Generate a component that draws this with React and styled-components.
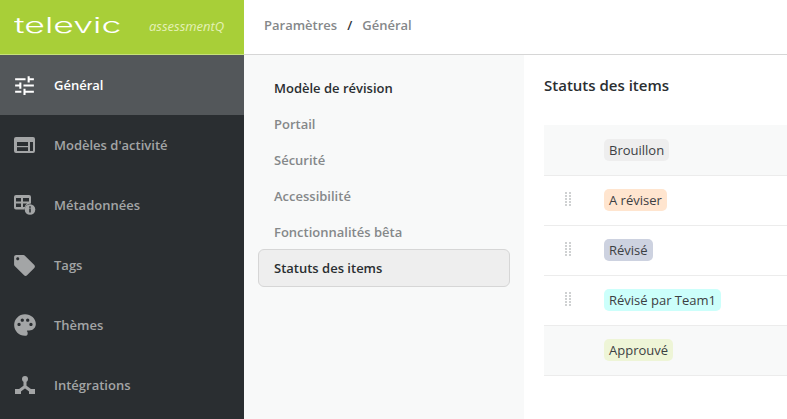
import React from 'react';
import styled, { createGlobalStyle } from 'styled-components';
import { MdTune, MdLocalOffer, MdPalette } from 'react-icons/md';

const GlobalStyle = createGlobalStyle`
  html, body {
    margin: 0;
    height: 100%;
    overflow: hidden;
    background: #fff;
    font-family: "Open Sans", "Liberation Sans", sans-serif;
  }
  * { box-sizing: border-box; }
`;

const Page = styled.div`
  display: flex;
  width: 787px;
  height: 419px;
  overflow: hidden;
`;

const Sidebar = styled.aside`
  width: 244px;
  flex: none;
  background: #2a2e31;
`;

const Brand = styled.div`
  display: flex;
  align-items: center;
  height: 55px;
  padding: 0 0 4px 14px;
  background: #a8cf38;
  border-bottom: 1px solid #c6e17a;
`;

const BrandName = styled.span`
  width: 106px;
  font-family: "Inter", sans-serif;
  font-size: 22px;
  font-weight: 300;
  line-height: 30px;
  color: #fff;
  transform: scaleX(1.62);
  transform-origin: left center;
`;

const BrandProduct = styled.span`
  margin-left: 29px;
  padding-top: 2px;
  font-size: 13px;
  font-style: italic;
  color: #e4f1b6;
`;

const MenuItem = styled.div`
  display: flex;
  align-items: center;
  gap: 19px;
  height: 60px;
  padding-left: 14px;
  font-size: 13px;
  font-weight: 600;
  color: ${(p) => (p.$active ? '#fff' : '#a3a5a6')};
  background: ${(p) => (p.$active ? '#53575a' : 'transparent')};
`;

const IconBox = styled.span`
  display: flex;
  align-items: center;
  justify-content: center;
  width: 21px;
  height: 21px;
  color: ${(p) => (p.$active ? '#fff' : '#a3a5a6')};

  svg {
    flex: none;
  }
`;

const Main = styled.div`
  display: flex;
  flex-direction: column;
  flex: 1;
  min-width: 0;
`;

const Breadcrumb = styled.header`
  display: flex;
  align-items: center;
  gap: 10px;
  height: 55px;
  padding: 0 0 4px 20px;
  font-size: 13px;
  font-weight: 600;
  color: #85888a;
  border-bottom: 1px solid #d6d6d6;
`;

const Slash = styled.span`
  color: #33373a;
`;

const Body = styled.div`
  display: flex;
  flex: 1;
`;

const SubNav = styled.nav`
  display: flex;
  flex-direction: column;
  width: 280px;
  flex: none;
  padding: 15px 14px 0;
  background: #f8f9f9;
`;

const SubNavItem = styled.div`
  display: flex;
  align-items: center;
  height: ${(p) => (p.$selected ? '38px' : '36px')};
  margin-top: ${(p) => (p.$selected ? '-1px' : '0')};
  padding-left: 15px;
  font-size: 13px;
  font-weight: 600;
  color: ${(p) => (p.$muted ? '#85888a' : '#2a2e31')};
  background: ${(p) => (p.$selected ? '#eeeeee' : 'transparent')};
  border: 1px solid ${(p) => (p.$selected ? '#d6d6d6' : 'transparent')};
  border-radius: 6px;
`;

const Content = styled.section`
  flex: 1;
  padding: 20px 0 0 20px;
`;

const Title = styled.h2`
  margin: 0 0 29px;
  font-size: 15px;
  line-height: 21px;
  font-weight: 600;
  color: #2a2e31;
`;

const Row = styled.div`
  display: flex;
  align-items: center;
  height: 50px;
  padding-bottom: 1px;
  background: ${(p) => (p.$locked ? '#f8f9f9' : '#fff')};
  border-bottom: 1px solid #ececec;

  &:first-of-type {
    height: 51px;
    padding-bottom: 0;
  }
`;

const HandleCell = styled.span`
  display: flex;
  justify-content: center;
  width: 60px;
  padding: 0 12px 2px 0;
`;

const Badge = styled.span`
  padding: 0 5px;
  height: 22px;
  font-size: 13px;
  line-height: 22px;
  color: #3c4043;
  background: ${(p) => p.$color};
  border-radius: 5px;
`;

const Handle = () => (
  <svg width="6" height="15" viewBox="0 0 6 15" fill="#cfd1d2">
    {[0, 3, 6, 9, 12].map((y) => (
      <g key={y}>
        <rect x="0" y={y} width="2" height="2" />
        <rect x="4" y={y} width="2" height="2" />
      </g>
    ))}
  </svg>
);

const TemplateIcon = () => (
  <svg width="21" height="16" viewBox="0 0 21 16">
    <path
      fill="currentColor"
      fillRule="evenodd"
      d="M2 0h17a2 2 0 0 1 2 2v12a2 2 0 0 1-2 2H2a2 2 0 0 1-2-2V2a2 2 0 0 1 2-2zM3 5v9h11V5H3zm13 0v9h3V5h-3z"
    />
    <rect x="3" y="9" width="11" height="1.2" fill="currentColor" />
  </svg>
);

const MetadataIcon = () => (
  <svg width="22" height="20" viewBox="0 0 22 20">
    <path
      fill="currentColor"
      fillRule="evenodd"
      d="M2 0h13a2 2 0 0 1 2 2v6.5a6.5 6.5 0 0 0-6.5 6H2a2 2 0 0 1-2-2V2a2 2 0 0 1 2-2zM2 3v3.5h5V3H2zm7 0v3.5h6V3H9zM2 8.5V12h5V8.5H2zm7 0V12h1.6A7 7 0 0 1 13 8.5H9z"
    />
    <circle cx="16" cy="14.5" r="5.3" fill="currentColor" />
    <rect x="15.2" y="13.5" width="1.6" height="4" fill="#2a2e31" />
    <rect x="15.2" y="11.3" width="1.6" height="1.5" fill="#2a2e31" />
  </svg>
);

const IntegrationIcon = () => (
  <svg width="20" height="18" viewBox="0 0 20 18">
    <circle cx="10" cy="3" r="3" fill="currentColor" />
    <path d="M10 5v5.5M10 10.5L4 15M10 10.5L16 15" stroke="currentColor" strokeWidth="3" fill="none" />
    <rect x="0" y="13" width="6" height="5" fill="currentColor" />
    <rect x="14" y="13" width="6" height="5" fill="currentColor" />
  </svg>
);

const menu = [
  { label: 'Général', icon: <MdTune size={25} />, active: true },
  { label: "Modèles d'activité", icon: <TemplateIcon /> },
  { label: 'Métadonnées', icon: <MetadataIcon /> },
  { label: 'Tags', icon: <MdLocalOffer size={25} /> },
  { label: 'Thèmes', icon: <MdPalette size={26} /> },
  { label: 'Intégrations', icon: <IntegrationIcon /> },
];

const subNav = [
  { label: 'Modèle de révision' },
  { label: 'Portail', muted: true },
  { label: 'Sécurité', muted: true },
  { label: 'Accessibilité', muted: true },
  { label: 'Fonctionnalités bêta', muted: true },
  { label: 'Statuts des items', selected: true },
];

const statuses = [
  { label: 'Brouillon', color: '#eeeeee', locked: true },
  { label: 'A réviser', color: '#ffe5cf' },
  { label: 'Révisé', color: '#cdd2e0' },
  { label: 'Révisé par Team1', color: '#ccfffb' },
  { label: 'Approuvé', color: '#eef5d7', locked: true },
];

const App = () => (
  <>
    <GlobalStyle />
    <Page>
      <Sidebar>
        <Brand>
          <BrandName>televic</BrandName>
          <BrandProduct>assessmentQ</BrandProduct>
        </Brand>
        {menu.map((item) => (
          <MenuItem key={item.label} $active={item.active}>
            <IconBox $active={item.active}>{item.icon}</IconBox>
            {item.label}
          </MenuItem>
        ))}
      </Sidebar>
      <Main>
        <Breadcrumb>
          <span>Paramètres</span>
          <Slash>/</Slash>
          <span>Général</span>
        </Breadcrumb>
        <Body>
          <SubNav>
            {subNav.map((item) => (
              <SubNavItem key={item.label} $muted={item.muted} $selected={item.selected}>
                {item.label}
              </SubNavItem>
            ))}
          </SubNav>
          <Content>
            <Title>Statuts des items</Title>
            {statuses.map((status) => (
              <Row key={status.label} $locked={status.locked}>
                <HandleCell>{!status.locked && <Handle />}</HandleCell>
                <Badge $color={status.color}>{status.label}</Badge>
              </Row>
            ))}
          </Content>
        </Body>
      </Main>
    </Page>
  </>
);

export default App;
